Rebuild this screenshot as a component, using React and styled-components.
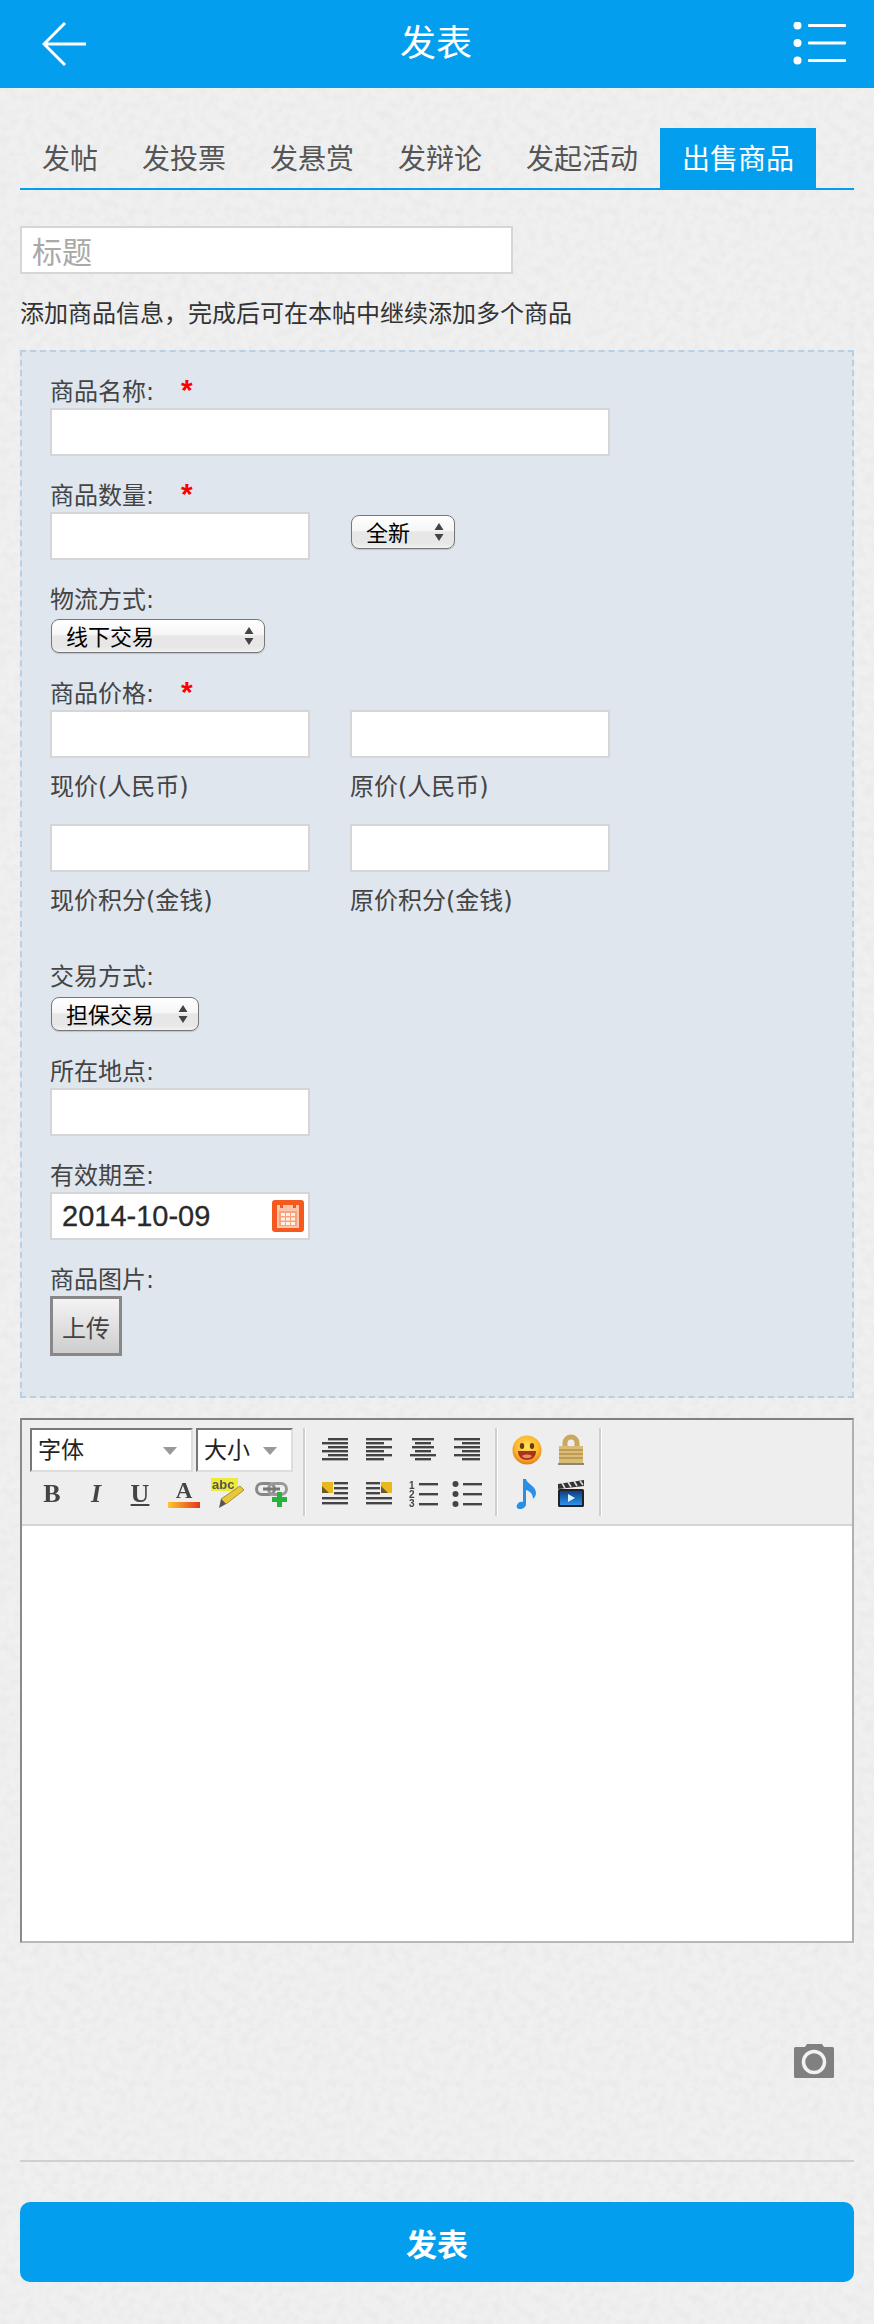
import React from "react";
import styled, { createGlobalStyle } from "styled-components";

const BLUE = "#039fee";
const INK = "#444";
const FONT = `"Noto Sans CJK SC", "Liberation Sans", sans-serif`;
// DejaVu only gives the colons and brackets, the CJK falls through to Noto
const LABEL_FONT = `"DejaVu Sans", "Noto Sans CJK SC", sans-serif`;

const noise = encodeURIComponent(
  `<svg xmlns="http://www.w3.org/2000/svg" width="156" height="156"><filter id="n"><feTurbulence type="fractalNoise" baseFrequency="0.115" numOctaves="2" stitchTiles="stitch"/><feColorMatrix values="0 0 0 0 0.55  0 0 0 0 0.55  0 0 0 0 0.55  0.3 0 0 0 -0.11"/></filter><rect width="156" height="156" filter="url(#n)"/></svg>`
);

const GlobalStyle = createGlobalStyle`
  html, body {
    margin: 0;
    padding: 0;
    background-color: #eeeeee;
  }
  * {
    box-sizing: border-box;
  }
`;

const Page = styled.div`
  width: 874px;
  height: 2324px;
  overflow: hidden;
  font-family: ${FONT};
  color: ${INK};
  background-color: #f0f0f0;
  background-image: url("data:image/svg+xml,${noise}");
`;

const Header = styled.header`
  height: 88px;
  padding: 0 28px 0 42px;
  display: flex;
  align-items: center;
  justify-content: space-between;
  background: ${BLUE};
`;

const HeaderTitle = styled.h1`
  margin: 0 6px 0 0;
  color: #fff;
  font-size: 36px;
  font-weight: 400;
  line-height: 80px;
  align-self: flex-start;
`;

const Content = styled.main`
  padding: 40px 20px 0;
`;

const Tabs = styled.nav`
  display: flex;
  height: 62px;
  border-bottom: 2px solid ${BLUE};
`;

const Tab = styled.a`
  padding: 0 22px;
  height: 60px;
  font-size: 28px;
  line-height: 58px;
  color: ${(props) => (props.$active ? "#fff" : "#555")};
  background: ${(props) => (props.$active ? BLUE : "transparent")};
`;

const TitleInput = styled.input`
  display: block;
  width: 493px;
  height: 48px;
  margin-top: 36px;
  padding: 0 10px;
  border: 2px solid #d6d6d6;
  border-radius: 0;
  outline: none;
  background: #fff;
  font-family: ${FONT};
  font-size: 30px;
  &::placeholder {
    color: #a9a9a9;
    opacity: 1;
  }
`;

const Hint = styled.p`
  margin: 21px 0 0;
  height: 35px;
  font-size: 24px;
  line-height: 34px;
  color: #333;
`;

const Panel = styled.section`
  margin-top: 20px;
  height: 1048px;
  padding: 24px 28px 0;
  border: 2px dashed #b9d0e3;
  background: #dfe6ed;
`;

const Field = styled.div`
  padding-top: ${(props) => props.$top ?? 0}px;
  margin-bottom: ${(props) => props.$gap ?? 24}px;
`;

const Label = styled.div`
  height: 32px;
  font-family: ${LABEL_FONT};
  font-size: 24px;
  line-height: 32px;
  color: ${INK};
  display: flex;
`;

const Star = styled.span`
  margin-left: 27px;
  width: 14px;
  color: #f00;
  font-family: "Liberation Sans", sans-serif;
  font-size: 30px;
  font-weight: 700;
  line-height: 28px;
`;

const Input = styled.input`
  display: block;
  width: ${(props) => props.$w ?? 260}px;
  height: 48px;
  padding: 0 10px;
  border: 2px solid #d6d6d6;
  border-radius: 0;
  outline: none;
  background: #fff;
`;

const Columns = styled.div`
  display: grid;
  grid-template-columns: 260px 260px;
  column-gap: 40px;
  align-items: start;
`;

const Caption = styled.div`
  height: 32px;
  margin: 13px 0 21px;
  font-family: ${LABEL_FONT};
  font-size: 24px;
  line-height: 32px;
  color: ${INK};
`;

const SelectBox = styled.div`
  width: ${(props) => props.$w}px;
  height: 34px;
  margin: ${(props) => props.$top ?? 3}px 0 0 1px;
  padding: 0 10px 3px 14px;
  display: flex;
  align-items: center;
  justify-content: space-between;
  border: 1.5px solid #777;
  border-radius: 8px;
  background: linear-gradient(#fff 0%, #f6f6f6 45%, #e7e7e7 50%, #e7e7e7 85%, #f2f2f2 100%);
  box-shadow: 0 1px 1px rgba(0, 0, 0, 0.15);
  color: #000;
  font-size: 22px;
  line-height: 30px;
`;

const SelectArrows = styled.svg`
  margin-top: 3px;
`;

const DateBox = styled.div`
  width: 260px;
  height: 48px;
  padding: 0 4px 0 10px;
  display: flex;
  align-items: center;
  justify-content: space-between;
  border: 2px solid #d6d6d6;
  background: #fff;
`;

const DateValue = styled.input`
  width: 190px;
  padding: 0;
  border: 0;
  outline: none;
  background: transparent;
  color: #2a2a2a;
  font-family: "Liberation Sans", sans-serif;
  font-size: 29px;
  -webkit-text-stroke: 0.3px #2a2a2a;
`;

const UploadButton = styled.button`
  display: block;
  width: 72px;
  height: 60px;
  padding: 0;
  border: 3px solid #888;
  background: linear-gradient(#f4f4f4, #cdcdcd);
  color: ${INK};
  font-family: ${FONT};
  font-size: 24px;
`;

const Editor = styled.section`
  margin-top: 20px;
  height: 525px;
  display: flex;
  flex-direction: column;
  border-style: solid;
  border-width: 2px;
  border-color: #808080 #b0b0b0 #b8b8b8 #8a8a8a;
`;

const Toolbar = styled.div`
  height: 106px;
  padding: 8px 0 0 8px;
  display: flex;
  align-items: flex-start;
  background: #eeeeee;
  border-bottom: 2px solid #d4d4d4;
`;

const ToolGroup = styled.div`
  width: ${(props) => props.$w}px;
  height: 88px;
  padding-left: ${(props) => props.$pad ?? 0}px;
  border-right: 2px solid #cfcfcf;
  box-shadow: 1px 0 0 #fff;
`;

const ToolRow = styled.div`
  display: flex;
  align-items: center;
  height: 44px;
`;

const FontSelect = styled.div`
  width: ${(props) => props.$w}px;
  height: 44px;
  margin-right: 3px;
  padding: 0 14px 4px 6px;
  display: flex;
  align-items: center;
  justify-content: space-between;
  border-style: solid;
  border-width: 2px;
  border-color: #777 #ddd #ddd #777;
  background: #fff;
  color: #222;
  font-size: 23px;
`;

const Caret = styled.span`
  margin-top: 6px;
  border-left: 7px solid transparent;
  border-right: 7px solid transparent;
  border-top: 8px solid #999;
`;

const Tool = styled.span`
  width: 44px;
  height: 44px;
  flex: none;
  display: flex;
  align-items: center;
  justify-content: center;
  filter: blur(0.6px);
`;

const ToolLetter = styled.span`
  font-family: "Liberation Serif", serif;
  font-size: 26px;
  font-weight: 700;
  font-style: ${(props) => (props.$italic ? "italic" : "normal")};
  text-decoration: ${(props) => (props.$under ? "underline" : "none")};
  color: #444;
  line-height: 26px;
`;

const EditorBody = styled.div`
  flex: 1;
  background: #fff;
`;

const CameraRow = styled.div`
  height: 219px;
  padding: 101px 20px 0 0;
  display: flex;
  justify-content: flex-end;
  align-items: flex-start;
  border-bottom: 2px solid #d0d0d0;
`;

const SubmitButton = styled.button`
  display: block;
  width: 100%;
  height: 80px;
  margin-top: 40px;
  border: 0;
  border-radius: 10px;
  background: ${BLUE};
  color: #fff;
  font-family: ${FONT};
  font-size: 31px;
  font-weight: 700;
`;

const BackIcon = () => (
  <svg width="44" height="44" viewBox="0 0 44 44" fill="none" stroke="#fff" strokeWidth="3">
    <path d="M23 1 2 22l21 21M2 22h42" />
  </svg>
);

const MenuIcon = () => (
  <svg width="54" height="44" viewBox="0 0 54 44" fill="#fff">
    <circle cx="5.5" cy="3.5" r="4" />
    <circle cx="5.5" cy="21" r="4" />
    <circle cx="5.5" cy="38.5" r="4" />
    <rect x="16" y="2" width="38" height="3" rx="1" />
    <rect x="16" y="19.5" width="38" height="3" rx="1" />
    <rect x="16" y="37" width="38" height="3" rx="1" />
  </svg>
);

const UpDown = () => (
  <SelectArrows width="10" height="18" viewBox="0 0 10 18" fill="#444">
    <path d="M5 0 9.500 7H.5zM5 18 .5 11h9z" />
  </SelectArrows>
);

const CalendarIcon = () => (
  <svg width="32" height="32" viewBox="0 0 32 32">
    <rect width="32" height="32" rx="3" fill="#f4591f" />
    <path d="M5 5h3v3h3V5h10v3h3V5h3v23H5z" fill="#fcc4aa" />
    <path d="M7 11h18v15H7z" fill="#f9a27c" />
    <path d="M9 13h4v3H9zM14 13h4v3h-4zM19 13h4v3h-4zM9 17.500h4v3H9zM14 17.500h4v3h-4zM19 17.500h4v3h-4zM9 22h4v3H9zM14 22h4v3h-4zM19 22h4v3h-4z" fill="#fff0e8" />
  </svg>
);

const TextColorIcon = () => (
  <svg width="34" height="30" viewBox="0 0 34 30">
    <defs>
      <linearGradient id="tc" x1="0" x2="1" y1="0" y2="0">
        <stop offset="0" stopColor="#fdc62c" />
        <stop offset="1" stopColor="#e6341a" />
      </linearGradient>
    </defs>
    <text x="17" y="19" textAnchor="middle" fontFamily="Liberation Serif" fontWeight="700" fontSize="23" fill="#444">A</text>
    <rect x="1" y="23" width="32" height="6" fill="url(#tc)" />
  </svg>
);

const HighlightIcon = () => (
  <svg width="34" height="32" viewBox="0 0 34 32">
    <rect x="0" y="0" width="27" height="13" fill="#ecea3b" />
    <text x="1" y="11" fontFamily="Liberation Sans" fontWeight="700" fontSize="13" fill="#555">abc</text>
    <path d="M29 8l4 4-18 14-5-5z" fill="#e8c83a" stroke="#a8902a" />
    <path d="M10 21l5 5-7 4z" fill="#555" />
  </svg>
);

const LinkIcon = () => (
  <svg width="34" height="28" viewBox="0 0 34 28">
    <rect x="1.500" y="3.500" width="18" height="11" rx="5.500" fill="none" stroke="#888" strokeWidth="3" />
    <rect x="13.500" y="3.500" width="18" height="11" rx="5.500" fill="none" stroke="#999" strokeWidth="3" />
    <rect x="8" y="7.500" width="17" height="3" fill="#777" />
    <path d="M22 12h5v5h5v5h-5v5h-5v-5h-5v-5h5z" fill="#27b33b" />
  </svg>
);

// rows is a list of [x, width] pairs, one for each line of the glyph
const LinesIcon = ({ rows }) => (
  <svg width="26" height="24" viewBox="0 0 26 24" fill="#444">
    {rows.map(([x, w], i) => (
      <rect key={i} x={x} y={i * 4} width={w} height="2.4" />
    ))}
  </svg>
);

const ImageLinesIcon = ({ right }) => (
  <svg width="26" height="24" viewBox="0 0 26 24" fill="#444">
    <rect x={right ? 0 : 12} y="0" width="14" height="2.4" />
    <rect x={right ? 0 : 12} y="5" width="14" height="2.4" />
    <rect x={right ? 0 : 12} y="10" width="14" height="2.4" />
    <rect x="0" y="15" width="26" height="2.4" />
    <rect x="0" y="20" width="26" height="2.4" />
    <rect x={right ? 15 : 0} y="0" width="11" height="11" fill="#e7b91d" />
    <path d={right ? "M15 4l7 7h-7z" : "M0 4l7 7H0z"} fill="#6b5a2a" />
  </svg>
);

const OrderedIcon = () => (
  <svg width="30" height="28" viewBox="0 0 30 28" fill="#444">
    <rect x="11" y="3" width="19" height="2.4" />
    <rect x="11" y="13" width="19" height="2.4" />
    <rect x="11" y="23" width="19" height="2.4" />
    <text x="1" y="9" fontFamily="Liberation Sans" fontWeight="700" fontSize="10">1</text>
    <text x="1" y="18" fontFamily="Liberation Sans" fontWeight="700" fontSize="10">2</text>
    <text x="1" y="27" fontFamily="Liberation Sans" fontWeight="700" fontSize="10">3</text>
  </svg>
);

const BulletIcon = () => (
  <svg width="30" height="28" viewBox="0 0 30 28" fill="#444">
    <circle cx="3.500" cy="4" r="3" />
    <circle cx="3.500" cy="14" r="3" />
    <circle cx="3.500" cy="24" r="3" />
    <rect x="11" y="3" width="19" height="2.4" />
    <rect x="11" y="13" width="19" height="2.4" />
    <rect x="11" y="23" width="19" height="2.4" />
  </svg>
);

const SmileIcon = () => (
  <svg width="30" height="30" viewBox="0 0 30 30">
    <defs>
      <radialGradient id="face" cx="0.5" cy="0.4" r="0.6">
        <stop offset="0" stopColor="#ffe45c" />
        <stop offset="0.7" stopColor="#fbb52b" />
        <stop offset="1" stopColor="#e5791a" />
      </radialGradient>
    </defs>
    <circle cx="15" cy="15" r="14.500" fill="url(#face)" />
    <ellipse cx="10" cy="11" rx="2.2" ry="3" fill="#6e3a10" />
    <ellipse cx="20" cy="11" rx="2.2" ry="3" fill="#6e3a10" />
    <path d="M6 16h18c0 6-4 9-9 9s-9-3-9-9z" fill="#a8321b" />
    <path d="M10 21c2-2 8-2 10 0-2 3-8 3-10 0z" fill="#f08a5c" />
  </svg>
);

const LockIcon = () => (
  <svg width="28" height="32" viewBox="0 0 28 32">
    <path d="M8 14V9a6 6 0 0 1 12 0v5" fill="none" stroke="#c9a860" strokeWidth="5" />
    <rect x="2" y="12" width="24" height="18" fill="#d9bc78" />
    <path d="M2 16h24M2 20h24M2 24h24" stroke="#b5914a" strokeWidth="1.4" />
    <rect x="1" y="29" width="26" height="2" fill="#8d8672" />
  </svg>
);

const NoteIcon = () => (
  <svg width="22" height="32" viewBox="0 0 22 32">
    <path d="M7 1h3c1 5 10 7 10 14 0 3-2 5-3 6 0-5-3-8-7-9v14c0 3-3 5-6 5s-4-2-3-4c1-3 4-4 6-3z" fill="#2c8fe6" />
  </svg>
);

const ClapperIcon = () => (
  <svg width="28" height="30" viewBox="0 0 28 30">
    <defs>
      <linearGradient id="film" x1="0" x2="0" y1="0" y2="1">
        <stop offset="0" stopColor="#0d3f86" />
        <stop offset="1" stopColor="#2b93ea" />
      </linearGradient>
    </defs>
    <path d="M1 5 27 1v6L1 10z" fill="#333" />
    <path d="M5 4l3 5M11 3l3 5M17 2l3 5M23 2l3 4" stroke="#ddd" strokeWidth="1.6" />
    <rect x="1" y="10" width="26" height="18" rx="1.500" fill="#222" />
    <rect x="3" y="12" width="22" height="14" fill="url(#film)" />
    <path d="M11 15l7 4-7 4z" fill="#dff0ff" />
  </svg>
);

const CameraIcon = () => (
  <svg width="40" height="34" viewBox="0 0 40 34">
    <path d="M1.500 3H11l2-3h15l2 3h8.500A1.500 1.500 0 0 1 40 4.500v28a1.500 1.500 0 0 1-1.500 1.500h-37A1.500 1.500 0 0 1 0 32.500v-28A1.500 1.500 0 0 1 1.500 3z" fill="#808080" />
    <circle cx="20" cy="18" r="10.500" fill="none" stroke="#f2f2f2" strokeWidth="3.500" />
  </svg>
);

const FormField = ({ label, required, top, gap, children }) => (
  <Field $top={top} $gap={gap}>
    <Label>
      {label}
      {required && <Star>*</Star>}
    </Label>
    {children}
  </Field>
);

const App = () => {
  return (
    <Page>
      <GlobalStyle />
      <Header>
        <BackIcon />
        <HeaderTitle>发表</HeaderTitle>
        <MenuIcon />
      </Header>

      <Content>
        <Tabs>
          <Tab>发帖</Tab>
          <Tab>发投票</Tab>
          <Tab>发悬赏</Tab>
          <Tab>发辩论</Tab>
          <Tab>发起活动</Tab>
          <Tab $active>出售商品</Tab>
        </Tabs>

        <TitleInput placeholder="标题" />
        <Hint>添加商品信息，完成后可在本帖中继续添加多个商品</Hint>

        <Panel>
          <FormField label="商品名称:" required>
            <Input $w={560} />
          </FormField>
          <FormField label="商品数量:" required>
            <Columns>
              <Input />
              <SelectBox $w={104}>全新<UpDown /></SelectBox>
            </Columns>
          </FormField>
          <FormField label="物流方式:" gap={25}>
            <SelectBox $w={214}>线下交易<UpDown /></SelectBox>
          </FormField>
          <FormField label="商品价格:" required gap={0}>
            <Columns>
              <div>
                <Input />
                <Caption>现价(人民币)</Caption>
              </div>
              <div>
                <Input />
                <Caption>原价(人民币)</Caption>
              </div>
              <div>
                <Input />
                <Caption>现价积分(金钱)</Caption>
              </div>
              <div>
                <Input />
                <Caption>原价积分(金钱)</Caption>
              </div>
            </Columns>
          </FormField>
          <FormField label="交易方式:" top={23} gap={25}>
            <SelectBox $w={148} $top={4}>担保交易<UpDown /></SelectBox>
          </FormField>
          <FormField label="所在地点:">
            <Input />
          </FormField>
          <FormField label="有效期至:">
            <DateBox>
              <DateValue readOnly value="2014-10-09" />
              <CalendarIcon />
            </DateBox>
          </FormField>
          <FormField label="商品图片:">
            <UploadButton>上传</UploadButton>
          </FormField>
        </Panel>

        <Editor>
          <Toolbar>
            <ToolGroup $w={275}>
              <ToolRow>
                <FontSelect $w={163}>字体<Caret /></FontSelect>
                <FontSelect $w={97}>大小<Caret /></FontSelect>
              </ToolRow>
              <ToolRow>
                <Tool><ToolLetter>B</ToolLetter></Tool>
                <Tool><ToolLetter $italic>I</ToolLetter></Tool>
                <Tool><ToolLetter $under>U</ToolLetter></Tool>
                <Tool><TextColorIcon /></Tool>
                <Tool><HighlightIcon /></Tool>
                <Tool><LinkIcon /></Tool>
              </ToolRow>
            </ToolGroup>
            <ToolGroup $w={192} $pad={8}>
              <ToolRow>
                <Tool><LinesIcon rows={[[6, 20], [0, 26], [6, 20], [0, 26], [6, 20], [0, 26]]} /></Tool>
                <Tool><LinesIcon rows={[[0, 26], [0, 18], [0, 26], [0, 18], [0, 26], [0, 18]]} /></Tool>
                <Tool><LinesIcon rows={[[2, 22], [5, 16], [2, 22], [5, 16], [0, 26], [5, 16]]} /></Tool>
                <Tool><LinesIcon rows={[[0, 26], [8, 18], [0, 26], [8, 18], [0, 26], [8, 18]]} /></Tool>
              </ToolRow>
              <ToolRow>
                <Tool><ImageLinesIcon /></Tool>
                <Tool><ImageLinesIcon right /></Tool>
                <Tool><OrderedIcon /></Tool>
                <Tool><BulletIcon /></Tool>
              </ToolRow>
            </ToolGroup>
            <ToolGroup $w={104} $pad={8}>
              <ToolRow>
                <Tool><SmileIcon /></Tool>
                <Tool><LockIcon /></Tool>
              </ToolRow>
              <ToolRow>
                <Tool><NoteIcon /></Tool>
                <Tool><ClapperIcon /></Tool>
              </ToolRow>
            </ToolGroup>
          </Toolbar>
          <EditorBody />
        </Editor>

        <CameraRow>
          <CameraIcon />
        </CameraRow>

        <SubmitButton>发表</SubmitButton>
      </Content>
    </Page>
  );
};

export default App;
